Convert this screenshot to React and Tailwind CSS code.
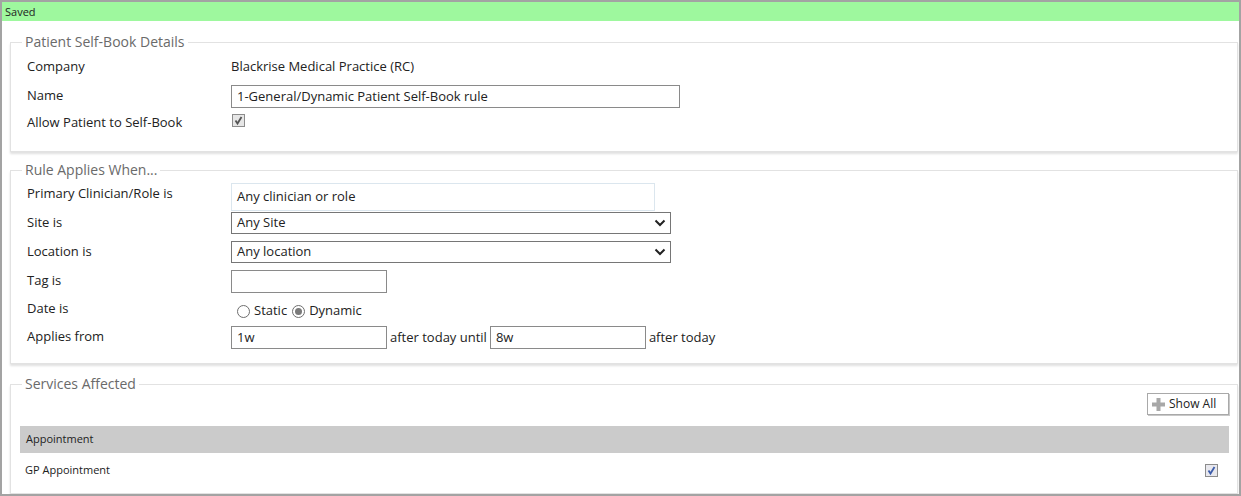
import React from "react";

const font = { fontFamily: '"Open Sans", "Noto Sans", sans-serif' };

const Chevron = () => (
  <svg width="12" height="8" viewBox="0 0 12 8" className="shrink-0">
    <path d="M1.5 1.5 L6 6 L10.5 1.5" fill="none" stroke="#222" strokeWidth="2" />
  </svg>
);

const Check = ({ color }) => (
  <svg width="11" height="11" viewBox="0 0 11 11">
    <path d="M2.5 5.5 L4.5 8.5 L8.5 2" fill="none" stroke={color} strokeWidth="1.8" />
  </svg>
);

const CheckBox = ({ color = "#555", bg = "bg-[#e6e6e6]" }) => (
  <span className={`flex h-[13px] w-[13px] items-center justify-center border border-[#8c8c8c] ${bg}`}>
    <Check color={color} />
  </span>
);

const Radio = ({ checked }) => (
  <span className="flex h-[13px] w-[13px] items-center justify-center rounded-full border border-[#6e6e6e] bg-white">
    {checked && <span className="h-[7px] w-[7px] rounded-full bg-[#7a7a7a]" />}
  </span>
);

const Select = ({ value }) => (
  <div className="flex h-[22px] w-[440px] items-center justify-between border border-[#767676] pl-[5px] pr-[4px] text-[13px] text-[#222]">
    <span>{value}</span>
    <Chevron />
  </div>
);

const TextBox = ({ value, width }) => (
  <div
    className={`flex h-[23px] items-center border border-[#8a8a8a] pl-[5px] text-[13px] text-[#222] ${width}`}
  >
    {value}
  </div>
);

// fieldset with the legend notched into its top border
const Section = ({ title, className, bodyClass, children }) => (
  <fieldset
    className={`ml-[8px] mr-[1px] border border-[#e2e2e2] shadow-[0_2px_2px_rgba(0,0,0,0.12)] ${className}`}
  >
    <legend className="ml-[11px] px-[3px] text-[14px] leading-[18px] text-[#6a6a6a]">{title}</legend>
    <div className={bodyClass}>{children}</div>
  </fieldset>
);

const Row = ({ label, h, children }) => (
  <div className={`flex ${h}`}>
    <div className="w-[204px] shrink-0 pt-[1px] text-[13px] leading-[18px] text-[#222]">{label}</div>
    <div className="flex-1">{children}</div>
  </div>
);

export default function App() {
  return (
    <div
      style={font}
      className="flex h-[496px] w-[1241px] flex-col overflow-hidden border-2 border-[#a3a3a3] bg-white"
    >
      <div className="h-[19px] shrink-0 bg-[#9ef89e] pl-[3px] text-[11px] leading-[19px] text-[#222]">Saved</div>

      {/* Self-book details */}
      <Section title="Patient Self-Book Details" className="mt-[12px] h-[119px]" bodyClass="pl-[16px] pt-[5px]">
        <Row label="Company" h="h-[29px]">
          <div className="pt-[1px] text-[13px] leading-[18px] text-[#222]">Blackrise Medical Practice (RC)</div>
        </Row>
        <Row label="Name" h="h-[27px]">
          <TextBox value="1-General/Dynamic Patient Self-Book rule" width="w-[449px]" />
        </Row>
        <Row label="Allow Patient to Self-Book" h="h-[24px]">
          <div className="pl-[1px] pt-[2px]">
            <CheckBox />
          </div>
        </Row>
      </Section>

      {/* Rule conditions */}
      <Section title="Rule Applies When..." className="mt-[9px] h-[203px]" bodyClass="pl-[16px] pt-[4px]">
        <Row label="Primary Clinician/Role is" h="h-[29px]">
          <div className="flex h-[28px] w-[424px] items-center border border-[#dbe6ee] pl-[5px] text-[13px] text-[#222]">
            Any clinician or role
          </div>
        </Row>
        <Row label="Site is" h="h-[29px]">
          <Select value="Any Site" />
        </Row>
        <Row label="Location is" h="h-[29px]">
          <Select value="Any location" />
        </Row>
        <Row label="Tag is" h="h-[28px]">
          <TextBox value="" width="w-[156px]" />
        </Row>
        <Row label="Date is" h="h-[28px]">
          <div className="flex h-[24px] items-center gap-[4px] pl-[6px] pt-[2px] text-[13px] text-[#222]">
            <Radio />
            <span className="mr-[1px]">Static</span>
            <Radio checked />
            <span>Dynamic</span>
          </div>
        </Row>
        <Row label="Applies from" h="h-[28px]">
          <div className="flex items-center text-[13px] text-[#222]">
            <TextBox value="1w" width="w-[156px]" />
            <span className="mx-[3px]">after today until</span>
            <TextBox value="8w" width="w-[156px]" />
            <span className="ml-[3px]">after today</span>
          </div>
        </Row>
      </Section>

      {/* Services */}
      <Section title="Services Affected" className="mt-[11px] flex-1" bodyClass="pl-[9px] pr-[8px]">
        <div className="flex justify-end">
          <button className="flex h-[22px] w-[82px] items-center gap-[3px] border border-[#a9a9a9] bg-white pl-[3px] text-[12px] text-[#222] shadow-[1px_1px_0_#c8c8c8]">
            <svg width="15" height="15" viewBox="0 0 15 15">
              <path d="M5.5 1 H9.5 V5.5 H14 V9.5 H9.5 V14 H5.5 V9.5 H1 V5.5 H5.5 Z" fill="#a8a8a8" />
            </svg>
            Show All
          </button>
        </div>
        <div className="mt-[11px] flex h-[27px] items-center bg-[#cbcbcb] pl-[6px] text-[11px] text-[#222]">
          Appointment
        </div>
        <div className="flex h-[34px] items-center justify-between pl-[5px] pr-[11px] text-[11px] text-[#222]">
          <span>GP Appointment</span>
          <CheckBox color="#3d5dab" bg="bg-[#e8e8ee]" />
        </div>
      </Section>
    </div>
  );
}
